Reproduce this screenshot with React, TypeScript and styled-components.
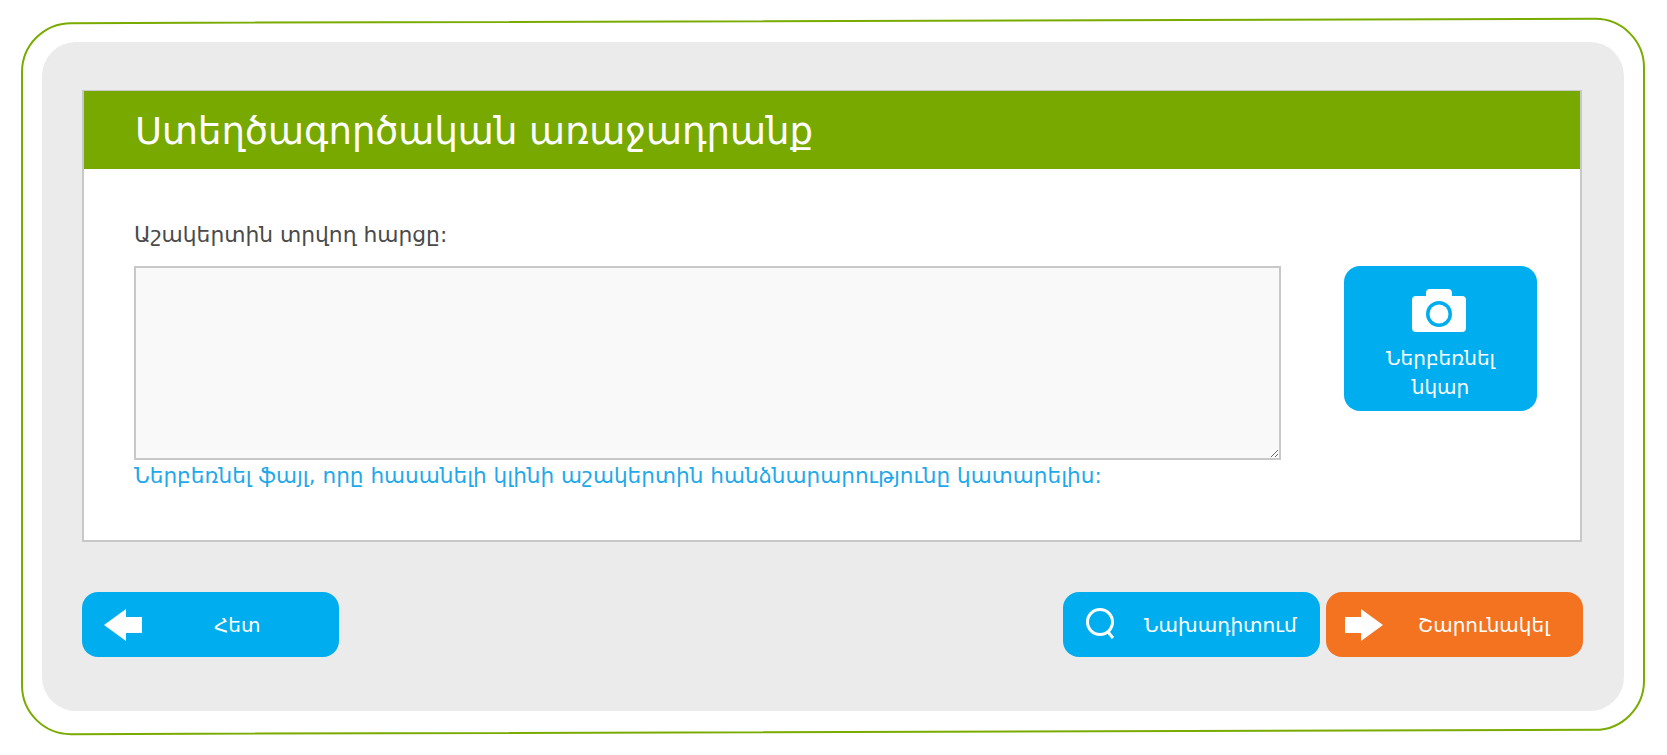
import React from "react";
import styled, { createGlobalStyle } from "styled-components";

const Global = createGlobalStyle`
  html, body { margin: 0; padding: 0; background: #fff; }
  body { font-family: "DejaVu Sans", "Noto Sans", sans-serif; }
`;

const Page = styled.div`
  position: relative;
  box-sizing: border-box;
  width: 1667px;
  height: 755px;
  padding: 42px 43px 44px 42px;
  overflow: hidden;
  &::before {
    content: "";
    position: absolute;
    left: 21px;
    top: 20px;
    width: 1624px;
    height: 713px;
    box-sizing: border-box;
    border: 2px solid #7aab00;
    border-radius: 50px;
    transform: skewY(-0.16deg);
  }
`;

const Panel = styled.main`
  box-sizing: border-box;
  height: 669px;
  padding: 48px 41px 0 40px;
  background: #ebebeb;
  border-radius: 34px;
  display: flex;
  flex-direction: column;
  gap: 50px;
`;

const Card = styled.section`
  box-sizing: border-box;
  height: 452px;
  margin-right: 1px;
  background: #fff;
  border: 2px solid #c8c8c8;
  border-top-width: 1px;
`;

const Header = styled.h1`
  box-sizing: border-box;
  height: 78px;
  margin: 0;
  padding: 0 0 0 51px;
  background: #78a900;
  color: #fff;
  font-size: 37px;
  font-weight: 400;
  line-height: 81px;
  white-space: nowrap;
`;

const Body = styled.div`
  display: grid;
  grid-template-columns: 1147px 193px;
  column-gap: 63px;
  padding: 50px 0 0 50px;
`;

const Label = styled.div`
  grid-column: 1 / 3;
  height: 47px;
  color: #4a4a4a;
  font-size: 21.8px;
  line-height: 32px;
`;

const Area = styled.textarea`
  display: block;
  box-sizing: border-box;
  width: 1147px;
  height: 194px;
  margin: 0;
  padding: 4px;
  background: #f9f9f9;
  border: 2px solid #c8c8c8;
  outline: none;
`;

const PhotoButton = styled.button`
  box-sizing: border-box;
  width: 193px;
  height: 145px;
  padding: 22px 10px 0;
  border: 0;
  border-radius: 16px;
  background: #00aeef;
  color: #fff;
  font-family: inherit;
  font-size: 20px;
  line-height: 29px;
  display: flex;
  flex-direction: column;
  align-items: center;
`;

const PhotoLabel = styled.span`
  margin-top: 11px;
  width: 140px;
  text-align: center;
`;

const CameraIcon = styled.svg`
  margin-left: -3px;
`;

const FileLink = styled.a`
  grid-column: 1 / 3;
  color: #1fa8ea;
  font-size: 21.6px;
  line-height: 32px;
  white-space: nowrap;
`;

const Actions = styled.div`
  display: flex;
  align-items: center;
`;

const RightActions = styled.div`
  margin-left: auto;
  display: flex;
  gap: 6px;
`;

const ActionButton = styled.button<{ $orange?: boolean; $textLeft: number }>`
  position: relative;
  box-sizing: border-box;
  width: 257px;
  height: 65px;
  padding: 0 0 0 ${(p) => p.$textLeft}px;
  border: 0;
  border-radius: 16px;
  background: ${(p) => (p.$orange ? "#f47321" : "#00aeef")};
  color: #fff;
  font-family: inherit;
  font-size: 20px;
  white-space: nowrap;
  display: flex;
  align-items: center;
`;

const OverlayIcon = styled.svg<{ $left: number }>`
  position: absolute;
  left: ${(p) => p.$left}px;
  top: 50%;
  transform: translateY(-50%);
`;

export default function App() {
  return (
    <>
      <Global />
      <Page>
        <Panel>
          <Card>
            <Header>Ստեղծագործական առաջադրանք</Header>
            <Body>
              <Label>Աշակերտին տրվող հարցը:</Label>
              <Area />
              <PhotoButton>
                <CameraIcon width="56" height="45" viewBox="0 0 56 45">
                  <path
                    fill="#fff"
                    fillRule="evenodd"
                    d="M15 8 V5 Q15 1 19 1 H37 Q41 1 41 5 V8 H51 Q55 8 55 12 V40 Q55 44 51 44 H5 Q1 44 1 40 V12 Q1 8 5 8 Z M28 13 A13 13 0 1 0 28 39 A13 13 0 1 0 28 13 Z"
                  />
                  <circle cx="28" cy="26" r="9.5" fill="#fff" />
                </CameraIcon>
                <PhotoLabel>Ներբեռնել նկար</PhotoLabel>
              </PhotoButton>
              <FileLink>
                Ներբեռնել ֆայլ, որը հասանելի կլինի աշակերտին հանձնարարությունը կատարելիս:
              </FileLink>
            </Body>
          </Card>
          <Actions>
            <ActionButton $textLeft={132}>
              <OverlayIcon $left={21} width="40" height="32" viewBox="0 0 40 32">
                <path fill="#fff" d="M1 16 L23 0 V8 H39 V24 H23 V32 Z" />
              </OverlayIcon>
              Հետ
            </ActionButton>
            <RightActions>
              <ActionButton $textLeft={81}>
                <OverlayIcon $left={23} width="32" height="38" viewBox="0 0 32 38">
                  <circle cx="14" cy="16" r="12.5" fill="none" stroke="#fff" strokeWidth="3" />
                  <path d="M22 26 L27 32" stroke="#fff" strokeWidth="3" fill="none" />
                </OverlayIcon>
                Նախադիտում
              </ActionButton>
              <ActionButton $orange $textLeft={92}>
                <OverlayIcon $left={18} width="40" height="32" viewBox="0 0 40 32">
                  <path fill="#fff" d="M39 16 L17 0 V8 H1 V24 H17 V32 Z" />
                </OverlayIcon>
                Շարունակել
              </ActionButton>
            </RightActions>
          </Actions>
        </Panel>
      </Page>
    </>
  );
}
